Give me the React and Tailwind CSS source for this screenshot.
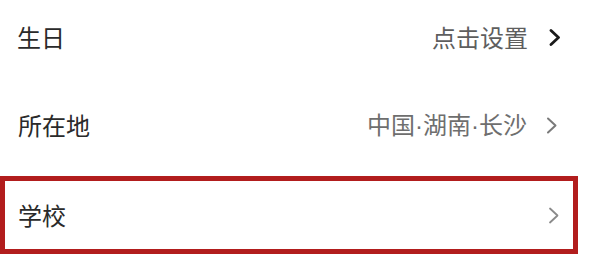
import React from "react";

function Chevron({ stroke, width, className }) {
  return (
    <svg width="12" height="17" viewBox="0 0 12 17" className={className}>
      <polyline points="2,1.5 9.5,8.5 2,15.5" fill="none" stroke={stroke} strokeWidth={width} strokeLinecap="round" strokeLinejoin="round" />
    </svg>
  );
}

function Dot() {
  return <span style={{ fontFamily: '"Liberation Sans", sans-serif' }}>·</span>;
}

export default function App() {
  return (
    <div className="w-[600px] h-[273px] bg-white flex flex-col" style={{ fontFamily: '"Noto Sans CJK SC", "Noto Sans", sans-serif' }}>
      <div className="h-[74px] flex items-center justify-between pl-[17px] pr-[39px]">
        <span className="text-[24px] leading-none text-[#2a2a2a]">生日</span>
        <div className="flex items-center">
          <span className="text-[24px] leading-none text-[#5e5e5e]">点击设置</span>
          <Chevron stroke="#1a1a1a" width={2.8} className="ml-[21px]" />
        </div>
      </div>
      <div className="h-[102px] flex items-center justify-between pl-[18px] pr-[42px]">
        <span className="text-[24px] leading-none text-[#2a2a2a]">所在地</span>
        <div className="flex items-center">
          <span className="text-[24px] leading-none text-[#6e6e6e]">中国<Dot />湖南<Dot />长沙</span>
          <Chevron stroke="#7a7a7a" width={2} className="ml-[19px]" />
        </div>
      </div>
      <div className="h-[78px] mr-[22px] border-[5px] border-[#b21d1d] flex items-center justify-between pl-[13px] pr-[13px]">
        <span className="text-[24px] leading-none text-[#2a2a2a]">学校</span>
        <Chevron stroke="#8a8a8a" width={1.8} />
      </div>
    </div>
  );
}
